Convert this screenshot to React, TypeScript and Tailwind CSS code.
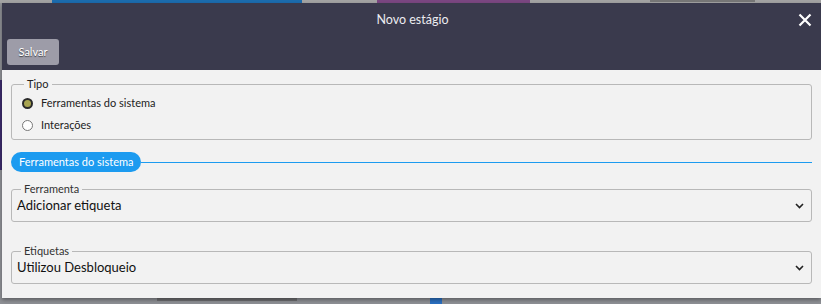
import React from "react";

function Chevron() {
  return (
    <svg width="9" height="6" viewBox="0 0 9 6" className="shrink-0">
      <path d="M1 1 L4.5 4.5 L8 1" stroke="#222" strokeWidth="1.6" fill="none" />
    </svg>
  );
}

function SelectField({ label, value }: { label: string; value: string }) {
  return (
    <fieldset className="border border-[#b8b8b8] rounded-[3px] mx-[11px] pl-[5px] pr-[7px] h-[39px] flex">
      <legend className="ml-[4px] px-[3px] text-[11px] leading-[12px] text-[#333]">{label}</legend>
      <div className="flex items-center justify-between w-full -mt-[4px]">
        <span className="text-[13px] text-[#111]">{value}</span>
        <Chevron />
      </div>
    </fieldset>
  );
}

function Radio({ checked, label }: { checked?: boolean; label: string }) {
  return (
    <div className="flex items-center h-[22px]">
      {checked ? (
        <div className="w-[11px] h-[11px] rounded-full border-[2px] border-[#2a2a2a] bg-[#a8a450] mr-[8px]" />
      ) : (
        <div className="w-[11px] h-[11px] rounded-full border border-[#777] bg-white mr-[8px]" />
      )}
      <span className="text-[11px] text-[#222]">{label}</span>
    </div>
  );
}

export default function App() {
  return (
    <div
      className="relative w-[821px] h-[304px] overflow-hidden bg-[#8e9095] pt-[3px] pl-[2px]"
      style={{ fontFamily: "Lato, 'Noto Sans', sans-serif" }}
    >
      {/* background bits */}
      <div className="absolute left-0 top-0 w-full h-[3px] bg-[#a3a3a3]" />
      <div className="absolute left-[52px] top-0 w-[250px] h-[3px] bg-[#1c6cae]" />
      <div className="absolute left-[377px] top-0 w-[153px] h-[3px] bg-[#7b4782]" />
      <div className="absolute left-[650px] top-0 w-[105px] h-[2px] border border-[#777]" />
      <div className="absolute left-0 top-[80px] w-[2px] h-[90px] bg-[#3b2a6b]" />
      <div className="absolute left-[157px] top-[298px] w-[140px] h-[3px] bg-[#6d6d70]" />
      <div className="absolute left-[430px] top-[298px] w-[12px] h-[6px] bg-[#2a6fc0]" />

      <div className="relative w-[819px] h-[295px] flex flex-col shadow-[0_2px_4px_rgba(0,0,0,0.35)]">
        <div className="h-[67px] bg-[#3a3a4d] flex flex-col px-[5px]">
          <div className="relative h-[34px] flex items-center justify-center">
            <span className="text-[12.5px] text-[#ececf0] ml-[2px]">Novo estágio</span>
            <svg
              width="14"
              height="14"
              viewBox="0 0 14 14"
              className="absolute right-[4px] top-[10px]"
            >
              <path d="M1.5 1.5 L12.5 12.5 M12.5 1.5 L1.5 12.5" stroke="#fff" strokeWidth="2.2" />
            </svg>
          </div>
          <div>
            <button className="mt-[2px] w-[52px] h-[26px] rounded-[3px] bg-[#9d9ca8] text-white text-[11px] [text-shadow:0_1px_1px_rgba(0,0,0,0.6)]">
              Salvar
            </button>
          </div>
        </div>

        <div className="flex-1 bg-[#f2f2f2] pt-[7px]">
          <fieldset className="border border-[#b8b8b8] rounded-[3px] mx-[9px] pl-[10px] h-[63px]">
            <legend className="ml-[2px] px-[3px] text-[11px] leading-[14px] text-[#222]">Tipo</legend>
            <div className="mt-[1px]">
              <Radio checked label="Ferramentas do sistema" />
              <Radio label="Interações" />
            </div>
          </fieldset>

          <div className="flex items-center mx-[9px] mt-[12px] mr-[9px]">
            <span className="h-[20px] px-[8px] rounded-full bg-[#1c9bf0] text-white text-[11px] flex items-center">
              Ferramentas do sistema
            </span>
            <div className="flex-1 h-px bg-[#1c9bf0]" />
          </div>

          <div className="mt-[11px] -mx-[2px]">
            <SelectField label="Ferramenta" value="Adicionar etiqueta" />
          </div>
          <div className="mt-[23px] -mx-[2px]">
            <SelectField label="Etiquetas" value="Utilizou Desbloqueio" />
          </div>
        </div>
      </div>
    </div>
  );
}
